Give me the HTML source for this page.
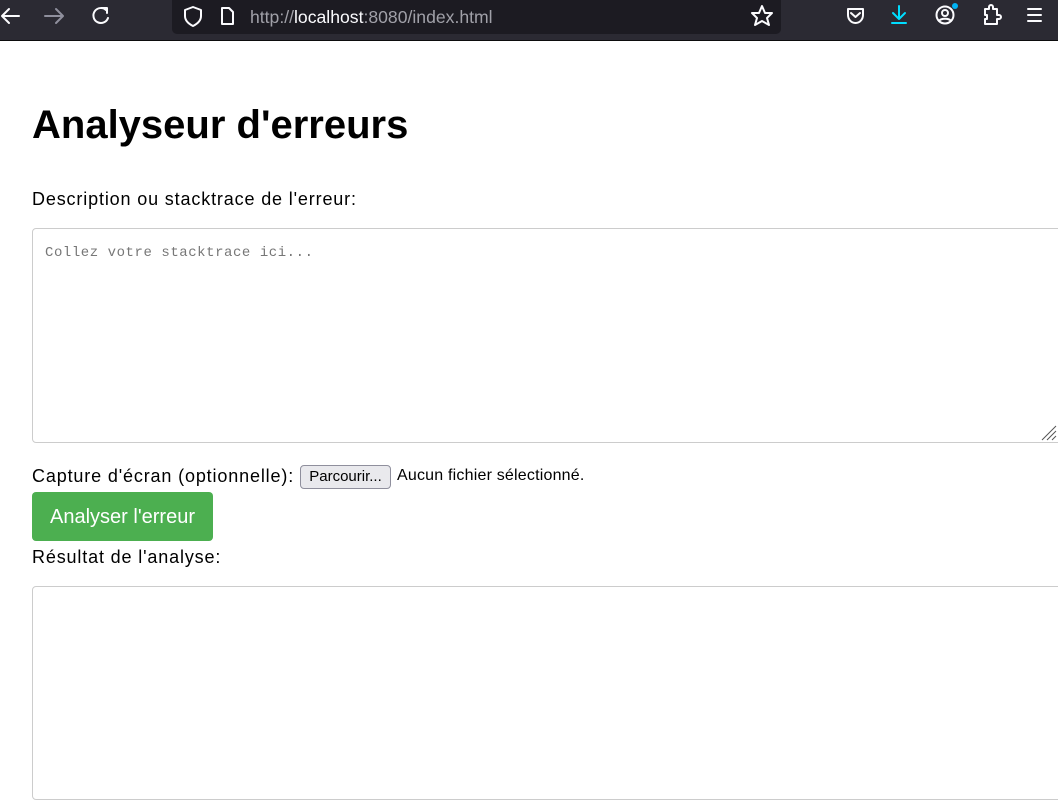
<!DOCTYPE html>
<html><head><meta charset="utf-8"><style>
body{margin:0;width:1058px;height:808px;overflow:hidden;background:#fff;font-family:"Liberation Sans",sans-serif;position:relative}
.bar{position:absolute;left:0;top:0;width:1058px;height:40px;background:#2b2a33;border-bottom:1px solid #0c0c0d}
.url{position:absolute;left:172px;top:0;width:609px;height:34px;background:#1c1b22;border-radius:0 0 5px 5px}
.ut{position:absolute;left:250px;top:7px;font-size:17.6px;color:#a0a0a8}
.ut b{font-weight:normal;color:#fbfbfe}
svg{position:absolute}
h1{position:absolute;left:32px;top:103px;margin:0;font-size:40px;font-weight:bold;color:#000}
.l{position:absolute;left:32px;font-size:18px;color:#000;letter-spacing:0.85px}
.box{position:absolute;left:32px;width:1030px;border:1px solid #ccc;border-radius:4px;box-sizing:border-box}
.ph{position:absolute;left:45px;top:245px;font-family:"Liberation Mono",monospace;font-size:14px;letter-spacing:0.55px;color:#777}
.fb{position:absolute;left:300px;top:465px;width:89px;height:22px;border:1px solid #8f8f9d;border-radius:4px;background:#e9e9ed;font-size:15px;line-height:22px;text-align:center}
.btn{position:absolute;left:32px;top:492px;width:181px;height:49px;background:#4caf50;border-radius:4px;color:#fff;font-size:20px;line-height:50px;text-align:center}
</style></head><body>
<div class="bar"></div>
<div class="url"></div>
<svg width="1058" height="40" fill="none" stroke="#fbfbfe" stroke-width="2" stroke-linecap="round" stroke-linejoin="round">
<path d="M19 16H3M9 9L2 16L9 23"/>
<path d="M45 16H62M56 9L63 16L56 23" stroke="#8f8f9d"/>
<path d="M106 10A7.5 7.5 0 1 0 108 18M101 8H107V13"/>
<path d="M193 7L185 10V16C185 21 189 24 193 26C197 24 201 21 201 16V10Z"/>
<path d="M222 8H229L233 12V24H222Z"/>
<path d="M762 6L765 13L772 13L767 18L769 25L762 21L755 25L757 18L752 13L759 13Z"/>
<path d="M848 9H863V15C863 19 860 23 855.5 23C851 23 848 19 848 15ZM851 13L855.5 17L860 13"/>
<path d="M899 6V19M893 13L899 19L905 13M892 23H906" stroke="#00ddff"/>
<circle cx="945" cy="15" r="8.5"/><circle cx="945" cy="13" r="3"/><path d="M939 21C941 18 949 18 951 21"/>
<circle cx="955" cy="6" r="3" fill="#00b3f4" stroke="none"/>
<path d="M985 9H989V7A2 2 0 0 1 993 7V9H997V15H999A2 2 0 0 1 999 19H997V24H985V19H987V15H985Z"/>
<path d="M1028 9H1041M1028 15H1041M1028 21H1041"/>
</svg>
<div class="ut">http://<b>localhost</b>:8080/index.html</div>
<h1>Analyseur d'erreurs</h1>
<div class="l" style="top:189px">Description ou stacktrace de l'erreur:</div>
<div class="box" style="top:228px;height:215px"></div>
<div class="ph">Collez votre stacktrace ici...</div>
<svg width="20" height="20" style="left:1038px;top:422px" stroke="#555" stroke-width="1"><path d="M18 4L4 18M18 9L9 18M18 14L14 18"/></svg>
<div class="l" style="top:466px">Capture d'écran (optionnelle):</div>
<div class="fb">Parcourir...</div>
<div class="l" style="left:397px;top:467px;font-size:16px;letter-spacing:0.2px">Aucun fichier sélectionné.</div>
<div class="btn">Analyser l'erreur</div>
<div class="l" style="top:547px">Résultat de l'analyse:</div>
<div class="box" style="top:586px;height:214px"></div>
</body></html>
